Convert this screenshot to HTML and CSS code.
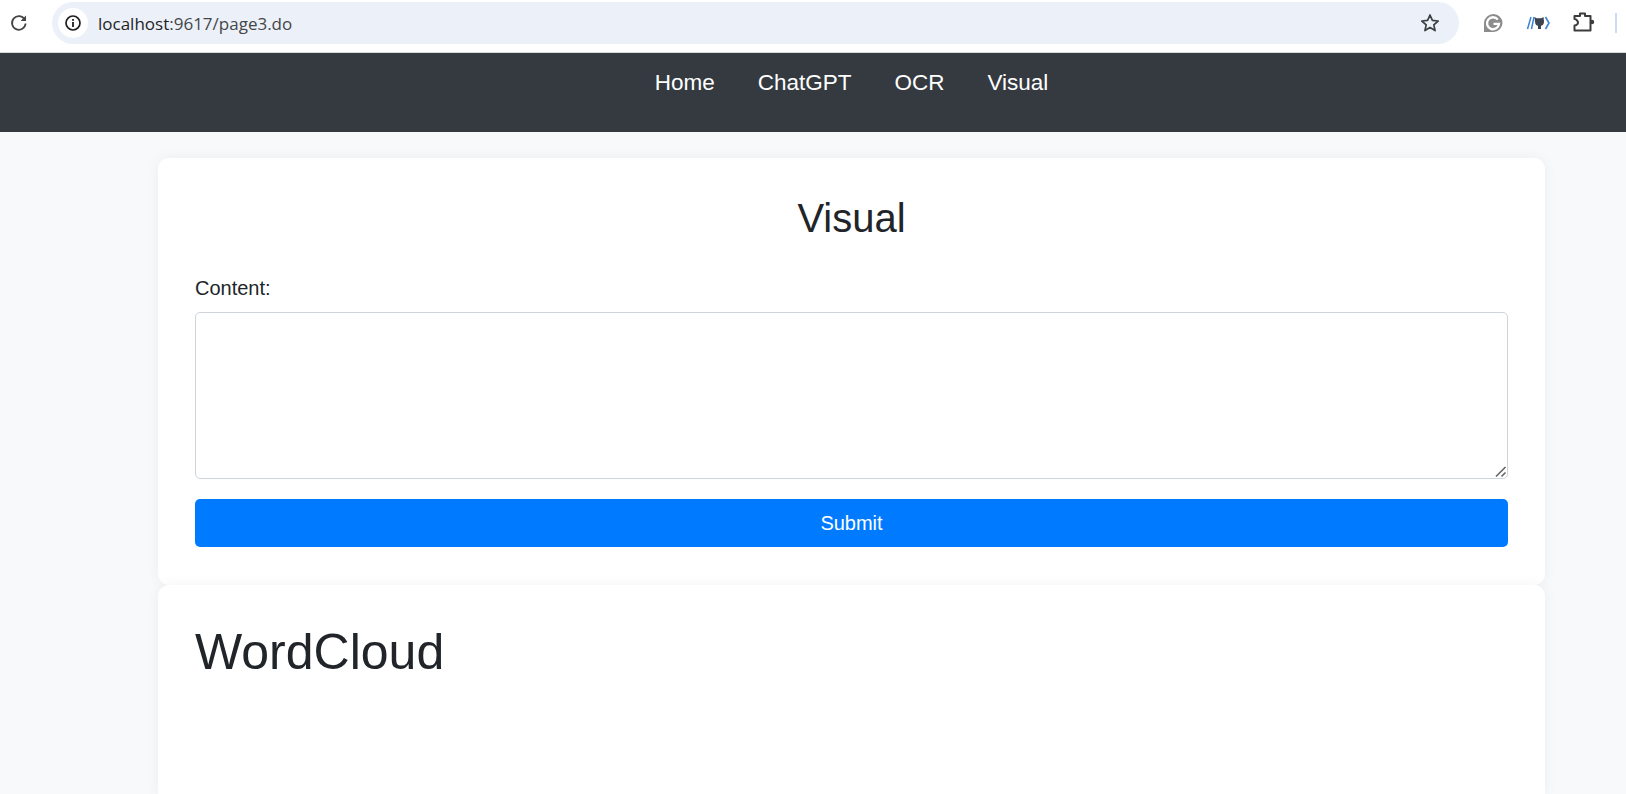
FILE: index.html
```html
<!DOCTYPE html>
<html lang="en">
<head>
<meta charset="utf-8">
<title>Visual</title>
<link rel="stylesheet" href="styles.css">
</head>
<body>
<div class="browser">
  <svg class="reload" width="20" height="20" viewBox="0 0 20 20"><path d="M15.8 6.700A6.800 6.800 0 1 0 16.600 10.500" fill="none" stroke="#444" stroke-width="1.800"/><path d="M17 2.600v5.400h-5.400z" fill="#444"/></svg>
  <div class="omnibox">
    <span class="site-chip"><svg width="18" height="18" viewBox="0 0 18 18"><circle cx="9" cy="9" r="7" fill="none" stroke="#1f1f1f" stroke-width="1.7"/><rect x="8.1" y="8" width="1.8" height="5" fill="#1f1f1f"/><rect x="8.1" y="5" width="1.8" height="1.8" fill="#1f1f1f"/></svg></span>
    <span class="url"><span class="host">localhost</span>:9617/page3.do</span>
    <svg class="star" width="22" height="22" viewBox="0 0 22 22"><path d="M11 3l2.4 5.4 5.8.6-4.4 3.900 1.300 5.700-5.100-3-5.100 3 1.300-5.700L2.800 9l5.800-.6z" fill="none" stroke="#3c4043" stroke-width="1.7" stroke-linejoin="round"/></svg>
  </div>
  <div class="extensions">
    <svg width="22" height="22" viewBox="0 0 22 22"><path d="M11.500 2a9 9 0 1 1 0 18H2v-9a9.500 9 0 0 1 9.500-9z" fill="#8c8c8c"/><path d="M15.800 7.600A6 6 0 1 0 17 11.800h-5.500" fill="none" stroke="#fff" stroke-width="2.300"/></svg>
    <svg width="24" height="22" viewBox="0 0 24 22"><path d="M5 5L1.500 17M8 5L5.500 17" fill="none" stroke="#3b82d6" stroke-width="1.500"/><path d="M19.500 5l3.500 6-3.500 6" fill="none" stroke="#3b82d6" stroke-width="1.600"/><path d="M8.500 5l2.200 1.200h4.600L17.500 5l.5 4.500c0 3-1.700 4-3 4.300V17h-3v-3.200c-1.300-.3-3-1.300-3-4.300z" fill="#3c4450"/></svg>
    <svg width="24" height="24" viewBox="0 0 24 24"><path d="M2.500 5H8V2.500h5V5h5.500v14.500H2.500v-5c3 0 3.500-2.500 3.500-3s-1-3.500-3.500-3.500z" fill="none" stroke="#3c3c3c" stroke-width="2" stroke-linejoin="round"/><circle cx="20" cy="11" r="2.200" fill="#3c3c3c"/></svg>
  </div>
  <span class="divider"></span>
</div>
<nav class="navbar">
  <a class="nav-link" href="#">Home</a>
  <a class="nav-link" href="#">ChatGPT</a>
  <a class="nav-link" href="#">OCR</a>
  <a class="nav-link" href="#">Visual</a>
</nav>
<main class="content">
  <section class="card form-card">
    <h1 class="card-title">Visual</h1>
    <form class="form">
      <label class="label" for="content">Content:</label>
      <div class="textarea-wrap">
        <textarea class="textarea" id="content"></textarea>
        <svg class="grip" width="12" height="12" viewBox="0 0 12 12"><path d="M1 10.500L10.500 1M6.500 10.500L10.500 6.500" stroke="#666" stroke-width="1.600" fill="none"/></svg>
      </div>
      <button class="submit" type="button">Submit</button>
    </form>
  </section>
  <section class="card cloud-card">
    <h2 class="cloud-title">WordCloud</h2>
  </section>
</main>
</body>
</html>
```
FILE: styles.css
```css
* { box-sizing: border-box; }
html, body { margin: 0; height: 794px; overflow: hidden; }
body { background: #f8f9fa; font-family: "Liberation Sans", Arial, sans-serif; color: #212529; }
.browser { height: 53px; background: #fff; border-bottom: 1px solid #d9d9d9; display: flex; align-items: center; position: relative; padding: 2px 0 8px; }
.reload { margin-left: 9px; flex: none; }
.omnibox { margin-left: 23px; width: 1407px; height: 42px; background: #ebf0f9; border-radius: 21px; display: flex; align-items: center; padding-left: 6px; padding-right: 18px; }
.site-chip { width: 30px; height: 30px; border-radius: 50%; background: #fff; display: flex; align-items: center; justify-content: center; flex: none; }
.url { margin-left: 10px; font-family: "Open Sans", sans-serif; font-size: 17px; color: #444746; flex: 1; }
.host { color: #1f1f1f; }
.star { flex: none; }
.extensions { display: flex; align-items: center; gap: 22px; margin-left: 23px; }
.divider { position: absolute; right: 9px; top: 13px; width: 2px; height: 20px; background: #c9dcf5; }
.navbar { height: 79px; background: #343a40; display: flex; justify-content: center; align-items: flex-start; gap: 43px; padding: 15px 0 0 77px; }
.nav-link { color: #fff; text-decoration: none; font-size: 22.5px; line-height: 30px; }
.content { width: 1387px; margin: 26px 0 0 158px; }
.card { background: #fff; border-radius: 11px; box-shadow: 0 0 14px rgba(0, 0, 0, 0.05); padding: 36px 37px; }
.form-card { height: 427px; }
.cloud-card { height: 211px; border-radius: 11px 11px 0 0; padding-top: 37px; }
.card-title { margin: 0 0 31px; font-size: 40px; font-weight: 400; line-height: 48px; text-align: center; }
.form { display: flex; flex-direction: column; }
.label { font-size: 20px; line-height: 30px; margin-bottom: 9px; }
.textarea-wrap { position: relative; margin-bottom: 20px; }
.textarea { width: 100%; height: 167px; border: 1px solid #ced4da; border-radius: 5px; background: #fff; display: block; resize: none; }
.grip { position: absolute; right: 1px; bottom: 1px; }
.submit { height: 48px; border: 0; border-radius: 5px; background: #007bff; color: #fff; font-family: inherit; font-size: 20px; }
.cloud-title { margin: 0; font-size: 50px; font-weight: 400; line-height: 60px; }
```
